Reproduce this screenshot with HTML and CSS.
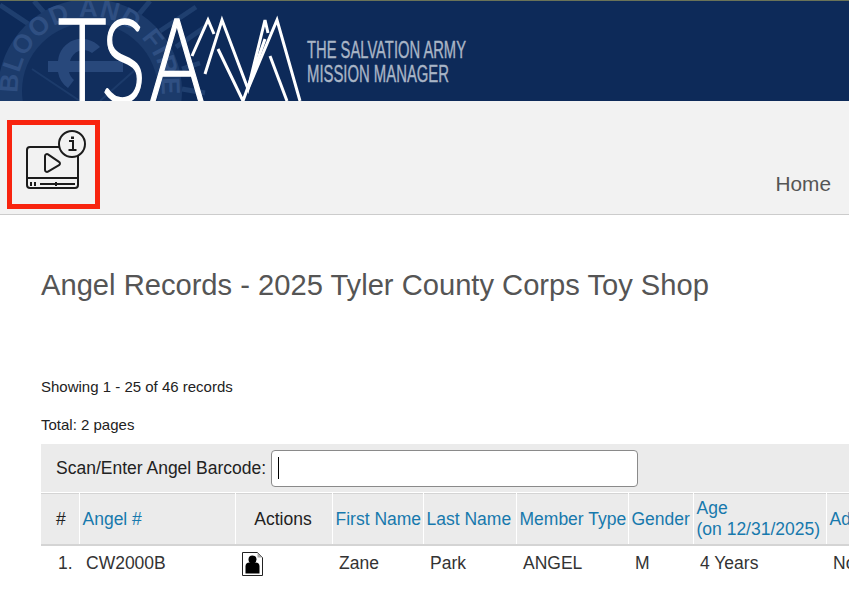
FILE: index.html
```html
<!DOCTYPE html>
<html>
<head>
    <title>Angel Records</title>
    <link rel="stylesheet" href="styles.css">
</head>
<body>
    <header class="banner">
        <svg class="banner-art" width="849" height="100" viewBox="0 0 849 100">
            <defs>
                <path id="sealArc" d="M18 92 A72 72 0 1 1 160 104"/>
            </defs>
            <g class="seal">
                <path d="M0 4L30 24M34 0L48 16M150 0L135 18M196 6L160 30M205 26L176 46M200 62L182 68M205 92L182 88" stroke="#1f3f6f" stroke-width="5" fill="none"/>
                <circle cx="90" cy="90" r="92" fill="#1c3b6b"/>
                <circle cx="90" cy="90" r="68" fill="#112e5d"/>
                <path d="M48 60h75v11H48z" fill="#28487b"/>
                <path d="M58 60a24 24 0 0 1 42-14l-8 6a14 14 0 0 0-22 8z" fill="#28487b"/>
                <path d="M58 71a24 24 0 0 0 10 16l6-8a14 14 0 0 1-5-8z" fill="#28487b"/>
                <path d="M32 68L80 100M136 68L100 100" stroke="#1c3b6b" stroke-width="2"/>
                <text class="seal-text"><textPath href="#sealArc">BLOOD AND FIRE</textPath></text>
            </g>
            <text class="logo-tsa" transform="translate(58 101) scale(.72 1)" x="0 60 127">TSA</text>
            <g class="logo-mm">
                <path d="M192 55L208 19L214 33"/>
                <path d="M205 73L222 19L248 88L265 19L268 32"/>
                <path d="M218 48L243 100L265 38"/>
                <path d="M248 88L277 19L300 100"/>
                <path d="M270 55L287 100"/>
            </g>
            <text class="logo-sub" x="307" y="57" textLength="159" lengthAdjust="spacingAndGlyphs">THE SALVATION ARMY</text>
            <text class="logo-sub" x="307" y="81" textLength="142" lengthAdjust="spacingAndGlyphs">MISSION MANAGER</text>
        </svg>
    </header>

    <nav class="navbar">
        <a class="help-box" href="#">
            <svg width="66" height="62" viewBox="0 0 66 62" fill="none" stroke="#1c1c1c" stroke-width="2">
                <path d="M38 17H6a3 3 0 0 0-3 3v35a3 3 0 0 0 3 3h45a3 3 0 0 0 3-3V26"/>
                <path d="M3 48h51"/>
                <path d="M21 26v14a2 2 0 0 0 3 1.700l11-6.500a2 2 0 0 0 0-3.400l-11-7.500a2 2 0 0 0-3 1.700z"/>
                <path d="M7 52v4M11 52v4M16 54h35M32 52v4"/>
                <circle cx="48" cy="14" r="13" fill="#f2f2f2"/>
                <path d="M45 11h4v9M44.500 20h8" stroke-width="2"/>
                <path d="M48.500 6.500v2.500" stroke-width="3"/>
            </svg>
        </a>
        <a class="nav-link" href="#">Home</a>
    </nav>

    <main class="content">
        <h1 class="page-title">Angel Records - 2025 Tyler County Corps Toy Shop</h1>
        <p class="summary first">Showing 1 - 25 of 46 records</p>
        <p class="summary">Total: 2 pages</p>

        <div class="records">
            <div class="scan-row">
                <label for="barcode">Scan/Enter Angel Barcode:</label>
                <div class="scan-input" id="barcode"><span class="caret"></span></div>
            </div>
            <table class="records-table">
                <colgroup>
                    <col class="c-num"><col class="c-angel"><col class="c-actions"><col class="c-first"><col class="c-last"><col class="c-type"><col class="c-gender"><col class="c-age"><col class="c-ad">
                </colgroup>
                <thead>
                    <tr>
                        <th class="plain">#</th>
                        <th><a href="#">Angel #</a></th>
                        <th class="plain center">Actions</th>
                        <th><a href="#">First Name</a></th>
                        <th><a href="#">Last Name</a></th>
                        <th><a href="#">Member Type</a></th>
                        <th><a href="#">Gender</a></th>
                        <th><a href="#">Age<br>(on 12/31/2025)</a></th>
                        <th><a href="#">Ad</a></th>
                    </tr>
                </thead>
                <tbody>
                    <tr>
                        <td class="num">1.</td>
                        <td>CW2000B</td>
                        <td class="action-cell">
                            <svg width="21" height="24" viewBox="0 0 21 24">
                                <path d="M.5.5h15l5 5v18H.5z" fill="#fff" stroke="#222"/>
                                <path d="M15.500.5v5h5z" fill="#aaa"/>
                                <circle cx="10.500" cy="7.500" r="4" fill="#000"/>
                                <path d="M3.500 21.500v-7q0-4 4-4h6q4 0 4 4v7z" fill="#000"/>
                            </svg>
                        </td>
                        <td>Zane</td>
                        <td>Park</td>
                        <td>ANGEL</td>
                        <td>M</td>
                        <td>4 Years</td>
                        <td>No</td>
                    </tr>
                </tbody>
            </table>
        </div>
    </main>
</body>
</html>
```

FILE: styles.css
```css
html, body {
    margin: 0;
    padding: 0;
    overflow: hidden;
}

body {
    font-family: "Liberation Sans", Arial, sans-serif;
    color: #222;
    background: #fff;
}

a {
    color: #1779ad;
    text-decoration: none;
}

.banner {
    height: 100px;
    border-top: 1px solid #6a7358;
    background: #0d2a59;
    overflow: hidden;
}

.banner-art {
    display: block;
}

.seal-text {
    font-size: 26px;
    font-weight: bold;
    letter-spacing: 1px;
    fill: #2f4f82;
}

.logo-tsa {
    font-family: "Lato", sans-serif;
    font-weight: 300;
    font-size: 116px;
    fill: #fff;
    stroke: #fff;
    stroke-width: 1.500;
}

.logo-mm path {
    fill: none;
    stroke: #fff;
    stroke-width: 3;
}

.logo-sub {
    font-family: "Liberation Sans", sans-serif;
    font-size: 23px;
    fill: #a9b5c6;
    stroke: #a9b5c6;
    stroke-width: .4;
}

.navbar {
    height: 114px;
    box-sizing: border-box;
    padding: 19px 18px 0 7px;
    display: flex;
    justify-content: space-between;
    align-items: flex-start;
    background: #f2f2f2;
    border-bottom: 1px solid #ccc;
}

.help-box {
    display: block;
    box-sizing: border-box;
    width: 93px;
    height: 89px;
    border: 5px solid #f8240f;
    padding: 5px 0 0 12px;
}

.nav-link {
    margin-top: 52px;
    color: #555;
    font-size: 20.800px;
}

.content {
    padding: 0 0 0 41px;
}

.page-title {
    margin: 0;
    padding-top: 54px;
    font-size: 29.150px;
    font-weight: normal;
    line-height: 32px;
    color: #555;
}

.summary {
    margin: 0;
    font-size: 15px;
    line-height: 18px;
    color: #222;
    padding-top: 20px;
}

.summary.first {
    padding-top: 77px;
}

.records {
    width: 1000px;
    margin-top: 10px;
}

.scan-row {
    display: flex;
    align-items: center;
    gap: 5px;
    height: 48px;
    padding-left: 15px;
    background: #ebebeb;
    font-size: 17.500px;
    color: #222;
}

.scan-input {
    box-sizing: border-box;
    width: 367px;
    height: 37px;
    padding: 6px 6px;
    background: #fff;
    border: 1px solid #8a8a8a;
    border-radius: 4px;
}

.caret {
    display: block;
    width: 1px;
    height: 22px;
    background: #000;
}

.records-table {
    table-layout: fixed;
    width: 1000px;
    margin-top: 1px;
    border-collapse: collapse;
    border-top: 1px solid #d4d4d4;
    font-size: 17.500px;
}

.c-num { width: 38px; }
.c-angel { width: 156px; }
.c-actions { width: 97px; }
.c-first { width: 91px; }
.c-last { width: 93px; }
.c-type { width: 112px; }
.c-gender { width: 65px; }
.c-age { width: 133px; }

.records-table th {
    height: 50px;
    padding: 0 3px;
    background: #ebebeb;
    border-left: 1px solid #fff;
    border-bottom: 2px solid #d4d4d4;
    font-weight: normal;
    text-align: left;
    line-height: 21px;
    white-space: nowrap;
}

.records-table th:first-child {
    border-left: 0;
}

.records-table th.plain {
    color: #222;
    padding-left: 15px;
}

.records-table th.center {
    padding-left: 2px;
    text-align: center;
}

.records-table td {
    padding: 7px 7px 9px;
    line-height: 20px;
    color: #333;
    white-space: nowrap;
}

.records-table td.num {
    padding-left: 17px;
}

.records-table td.action-cell {
    padding-top: 6px;
    padding-bottom: 0;
    vertical-align: top;
}

.action-cell svg {
    display: block;
}
```
